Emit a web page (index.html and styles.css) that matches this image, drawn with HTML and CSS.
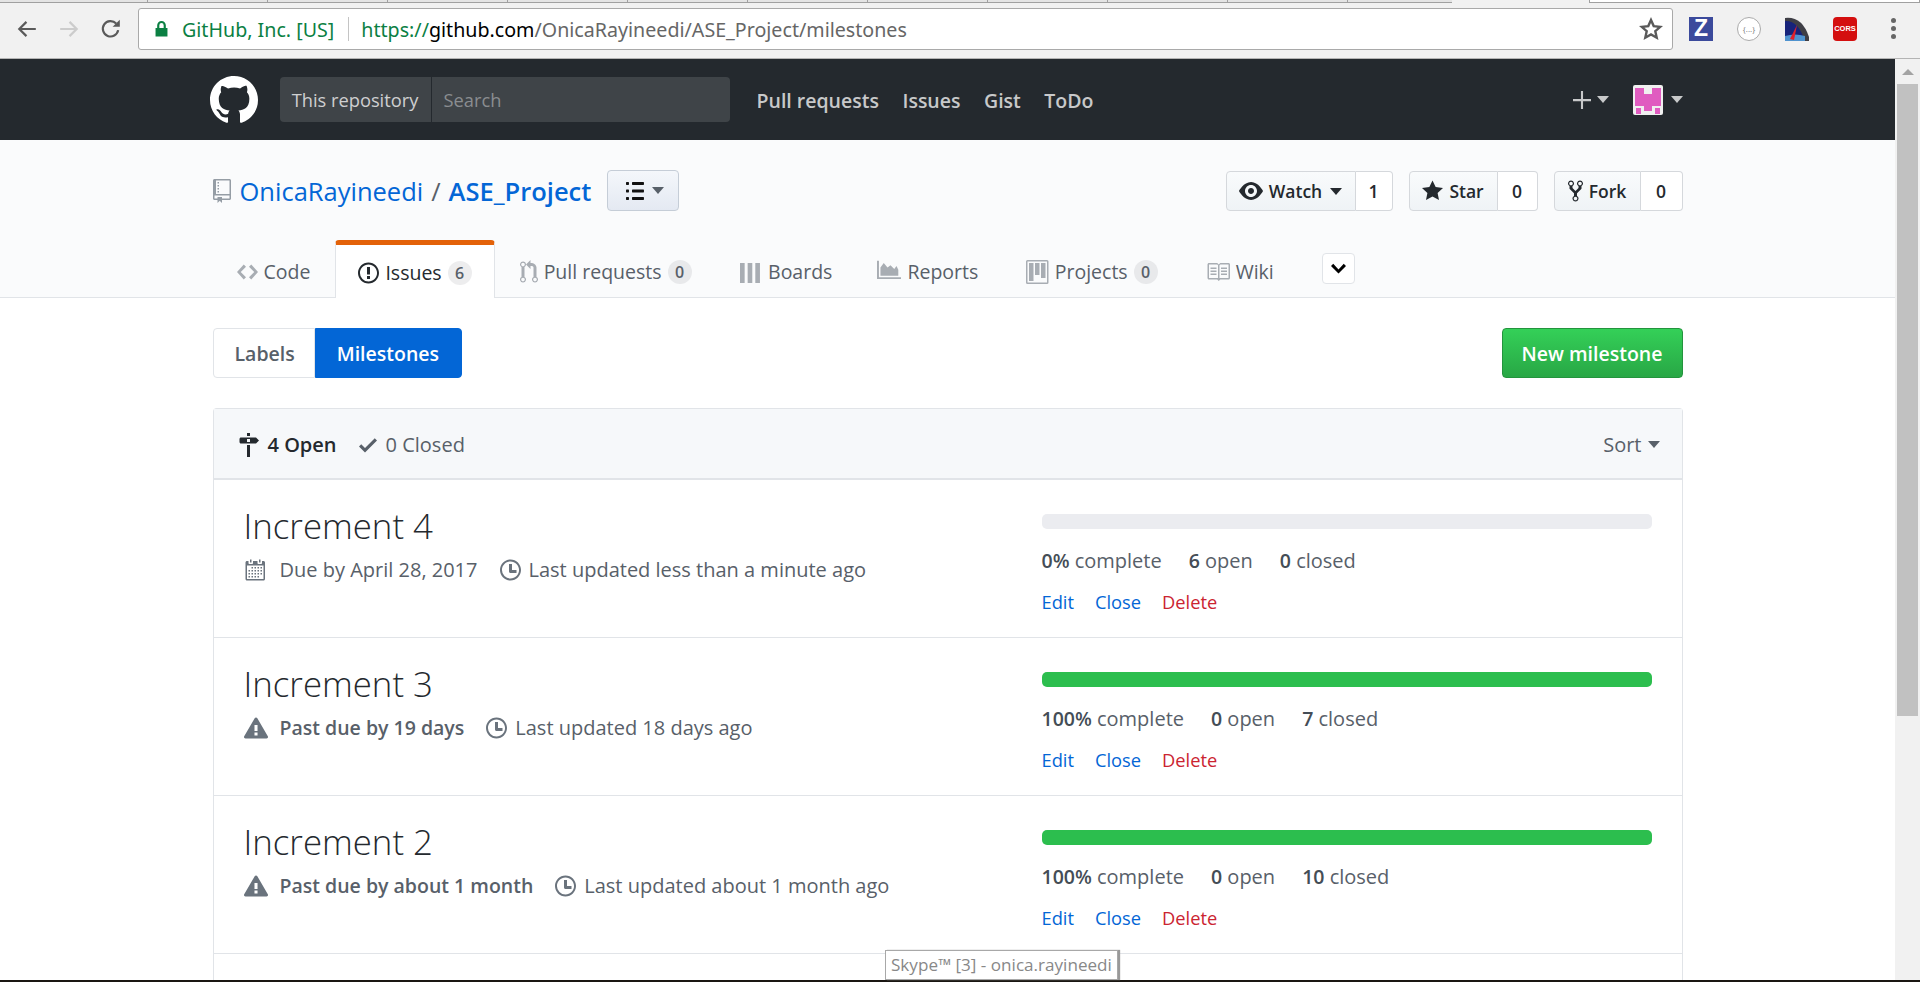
FILE: index.html
```html
<!DOCTYPE html>
<html lang="en">
<head>
    <meta charset="UTF-8" />
    <title>Milestones - OnicaRayineedi/ASE_Project</title>
    <link rel="stylesheet" href="styles.css">
</head>
<body>
    <svg class="sprite" width="0" height="0">
        <defs>
            <path id="i-mark" d="M8 0C3.58 0 0 3.58 0 8c0 3.54 2.29 6.53 5.47 7.59.4.07.55-.17.55-.38 0-.19-.01-.82-.01-1.49-2.01.37-2.53-.49-2.69-.94-.09-.23-.48-.94-.82-1.13-.28-.15-.68-.52-.01-.53.63-.01 1.08.58 1.23.82.72 1.21 1.87.87 2.33.66.07-.52.28-.87.51-1.07-1.78-.2-3.64-.89-3.64-3.95 0-.87.31-1.59.82-2.15-.08-.2-.36-1.02.08-2.12 0 0 .67-.21 2.2.82.64-.18 1.32-.27 2-.27.68 0 1.36.09 2 .27 1.53-1.04 2.2-.82 2.2-.82.44 1.1.16 1.92.08 2.12.51.56.82 1.27.82 2.15 0 3.07-1.87 3.75-3.65 3.95.29.25.54.73.54 1.48 0 1.07-.01 1.93-.01 2.2 0 .21.15.46.55.38A8.013 8.013 0 0 0 16 8c0-4.42-3.58-8-8-8z"/>
            <path id="i-repo" d="M4 9H3V8h1v1zm0-3H3v1h1V6zm0-2H3v1h1V4zm0-2H3v1h1V2zm8-1v12c0 .55-.45 1-1 1H6v2l-1.5-1.5L3 16v-2H1c-.55 0-1-.45-1-1V1c0-.55.45-1 1-1h10c.55 0 1 .45 1 1zm-1 10H1v2h2v-1h3v1h5v-2zm0-10H2v9h9V1z"/>
            <path id="i-list" d="M2 13c0 .59 0 1-.59 1H.59C0 14 0 13.59 0 13c0-.59 0-1 .59-1h.81c.59 0 .59.41.59 1H2zm2.59-9h6.81c.59 0 .59-.41.59-1 0-.59 0-1-.59-1H4.59C4 2 4 2.41 4 3c0 .59 0 1 .59 1zM1.41 7H.59C0 7 0 7.41 0 8c0 .59 0 1 .59 1h.81c.59 0 .59-.41.59-1 0-.59 0-1-.59-1h.01zm0-5H.59C0 2 0 2.41 0 3c0 .59 0 1 .59 1h.81c.59 0 .59-.41.59-1 0-.59 0-1-.59-1h.01zm10 5H4.59C4 7 4 7.41 4 8c0 .59 0 1 .59 1h6.81c.59 0 .59-.41.59-1 0-.59 0-1-.59-1h.01zm0 5H4.59C4 12 4 12.41 4 13c0 .59 0 1 .59 1h6.81c.59 0 .59-.41.59-1 0-.59 0-1-.59-1h.01z"/>
            <path id="i-code" d="M9.5 3L8 4.5 11.5 8 8 11.5 9.5 13 14 8 9.5 3zm-5 0L0 8l4.5 5L6 11.5 2.5 8 6 4.5 4.5 3z"/>
            <path id="i-issue" d="M7 2.3c3.14 0 5.7 2.56 5.7 5.7s-2.56 5.7-5.7 5.7A5.71 5.71 0 0 1 1.3 8c0-3.14 2.56-5.7 5.7-5.7zM7 1C3.14 1 0 4.14 0 8s3.14 7 7 7 7-3.14 7-7-3.14-7-7-7zm1 3H6v5h2V4zm0 6H6v2h2v-2z"/>
            <path id="i-pr" d="M11 11.28V5c-.03-.78-.34-1.47-.94-2.06C9.46 2.35 8.78 2.03 8 2H7V0L4 3l3 3V4h1c.27.02.48.11.69.31.21.2.3.42.31.69v6.28A1.993 1.993 0 0 0 10 15a1.993 1.993 0 0 0 1-3.72zm-1 2.92c-.66 0-1.2-.55-1.2-1.2 0-.65.55-1.2 1.2-1.2.65 0 1.2.55 1.2 1.2 0 .65-.55 1.2-1.2 1.2zM4 3c0-1.11-.89-2-2-2a1.993 1.993 0 0 0-1 3.72v6.56A1.993 1.993 0 0 0 2 15a1.993 1.993 0 0 0 1-3.72V4.72c.59-.34 1-.98 1-1.72zm-.8 10c0 .66-.55 1.2-1.2 1.2-.65 0-1.2-.55-1.2-1.2 0-.65.55-1.2 1.2-1.2.65 0 1.2.55 1.2 1.2zM2 4.2C1.34 4.2.8 3.65.8 3c0-.65.55-1.2 1.2-1.2.65 0 1.2.55 1.2 1.2 0 .65-.55 1.2-1.2 1.2z"/>
            <path id="i-boards" d="M0 2h3.100v13.300H0zM5.100 2h3.100v13.300H5.100zM10.200 2h3.100v13.300h-3.100z"/>
            <path id="i-reports" d="M0 .5h1.300v11H16v1.200H0zM2.300 10.500V5L4.500 2l2.500 3 2-1.500 2.500 2.500 1.500-2 1.200 2.500v4z"/>
            <path id="i-projects" d="M10 12h3V2h-3v10zm-4-2h3V2H6v8zm-4 4h3V2H2v12zm-1 1h13V1H1v14zM14 0H1a1 1 0 0 0-1 1v14a1 1 0 0 0 1 1h13a1 1 0 0 0 1-1V1a1 1 0 0 0-1-1z"/>
            <path id="i-book" d="M3 5h4v1H3V5zm0 3h4V7H3v1zm0 2h4V9H3v1zm11-5h-4v1h4V5zm0 2h-4v1h4V7zm0 2h-4v1h4V9zm2-6v9c0 .55-.45 1-1 1H9.5l-1 1-1-1H2c-.55 0-1-.45-1-1V3c0-.55.45-1 1-1h5.500l1 1 1-1H15c.55 0 1 .45 1 1zm-8 .5L7.500 3H2v9h6V3.500zm7-.5H9.500l-.5.5V12h6V3z"/>
            <path id="i-chevron" d="M5 11L0 6l1.5-1.5L5 8.25 8.5 4.5 10 6l-5 5z"/>
            <path id="i-eye" d="M8.06 2C3 2 0 8 0 8s3 6 8.06 6C13 14 16 8 16 8s-3-6-7.94-6zM8 12c-2.2 0-4-1.78-4-4 0-2.2 1.8-4 4-4 2.22 0 4 1.8 4 4 0 2.22-1.78 4-4 4zm2-4c0 1.11-.89 2-2 2-1.11 0-2-.89-2-2 0-1.11.89-2 2-2 1.11 0 2 .89 2 2z"/>
            <path id="i-star" d="M14 6l-4.9-.64L7 1 4.9 5.36 0 6l3.6 3.26L2.67 14 7 11.67 11.33 14l-.93-4.74L14 6z"/>
            <path id="i-fork" d="M8 1a1.993 1.993 0 0 0-1 3.72V6L5 8 3 6V4.72A1.993 1.993 0 0 0 2 1a1.993 1.993 0 0 0-1 3.72V6.5l3 3v1.78A1.993 1.993 0 0 0 5 15a1.993 1.993 0 0 0 1-3.72V9.5l3-3V4.72A1.993 1.993 0 0 0 8 1zM2 4.2C1.34 4.2.8 3.65.8 3c0-.65.55-1.2 1.2-1.2.65 0 1.2.55 1.2 1.2 0 .65-.55 1.2-1.2 1.2zm3 10c-.66 0-1.2-.55-1.2-1.2 0-.65.55-1.2 1.2-1.2.65 0 1.2.55 1.2 1.2 0 .65-.55 1.2-1.2 1.2zm3-10c-.66 0-1.2-.55-1.2-1.2 0-.65.55-1.2 1.2-1.2.65 0 1.2.55 1.2 1.2 0 .65-.55 1.2-1.2 1.2z"/>
            <path id="i-milestone" d="M8 2H6V0h2v2zm4 5H2c-.55 0-1-.45-1-1V4c0-.55.45-1 1-1h10l2 2-2 2zM8 4H6v2h2V4zM6 16h2V8H6v8z"/>
            <path id="i-check" d="M12 5l-8 8-4-4 1.5-1.5L4 10l6.5-6.5L12 5z"/>
            <path id="i-clock" d="M8 8h3v2H7c-.55 0-1-.45-1-1V4h2v4zM7 2.3c3.14 0 5.7 2.56 5.7 5.7s-2.56 5.7-5.7 5.7A5.71 5.71 0 0 1 1.3 8c0-3.14 2.56-5.7 5.7-5.7zM7 1C3.14 1 0 4.14 0 8s3.14 7 7 7 7-3.14 7-7-3.14-7-7-7z"/>
            <path id="i-calendar" d="M13 2h-1v1.5c0 .28-.22.5-.5.5h-2c-.28 0-.5-.22-.5-.5V2H6v1.5c0 .28-.22.5-.5.5h-2c-.28 0-.5-.22-.5-.5V2H2c-.55 0-1 .45-1 1v11c0 .55.45 1 1 1h11c.55 0 1-.45 1-1V3c0-.55-.45-1-1-1zm0 12H2V5h11v9zM5 3H4V1h1v2zm6 0h-1V1h1v2zM6 7H5V6h1v1zm2 0H7V6h1v1zm2 0H9V6h1v1zm2 0h-1V6h1v1zM4 9H3V8h1v1zm2 0H5V8h1v1zm2 0H7V8h1v1zm2 0H9V8h1v1zm2 0h-1V8h1v1zm-8 2H3v-1h1v1zm2 0H5v-1h1v1zm2 0H7v-1h1v1zm2 0H9v-1h1v1zm2 0h-1v-1h1v1zm-8 2H3v-1h1v1zm2 0H5v-1h1v1zm2 0H7v-1h1v1zm2 0H9v-1h1v1z"/>
            <path id="i-alert" d="M8.893 1.5c-.183-.31-.52-.5-.887-.5s-.703.19-.886.5L.138 13.499a.98.98 0 0 0 0 1.001c.193.31.53.501.886.501h13.964c.367 0 .704-.19.877-.5a1.03 1.03 0 0 0 .01-1.002L8.893 1.5zm.133 11.497H6.987v-2.003h2.039v2.003zm0-3.004H6.987V5.987h2.039v4.006z"/>
        </defs>
    </svg>

    <!-- browser chrome -->
    <div class="tabstrip">
        <div class="tabstrip-tabs">
            <i></i><i></i><i></i><i></i><i></i><i></i><i></i><i></i><i></i><i></i><i></i>
        </div>
        <div class="tabstrip-active"></div>
    </div>
    <div class="toolbar">
        <svg class="tool-btn" viewBox="0 0 20 20"><path d="M18 10H3M9.5 3.5 3 10l6.500 6.500" fill="none" stroke="#5a5a5a" stroke-width="2"/></svg>
        <svg class="tool-btn" viewBox="0 0 20 20"><path d="M2 10h15M10.500 3.500 17 10l-6.500 6.500" fill="none" stroke="#ccc" stroke-width="2"/></svg>
        <svg class="tool-btn" viewBox="0 0 20 20"><path d="M16.500 11a7 7 0 1 1-1.800-6" fill="none" stroke="#5a5a5a" stroke-width="2"/><path d="M18 1.500V8h-6.500z" fill="#5a5a5a"/></svg>
        <div class="omnibox">
            <svg class="lock" viewBox="0 0 12 16"><path d="M2 7V4.500a4 4 0 0 1 8 0V7h1.500v8H.5V7zm2 0h4V4.500a2 2 0 0 0-4 0z" fill="#0b8043"/></svg>
            <span class="secure">GitHub, Inc. [US]</span>
            <span class="omni-sep"></span>
            <span class="url"><span class="secure">https://</span><span class="url-host">github.com</span>/OnicaRayineedi/ASE_Project/milestones</span>
            <svg class="bookmark" viewBox="0 0 24 24"><path d="m12 3 2.700 6.100 6.600.7-5 4.400 1.400 6.500-5.700-3.300-5.700 3.300 1.400-6.500-5-4.400 6.600-.7z" fill="none" stroke="#5a5a5a" stroke-width="2.400"/></svg>
        </div>
        <div class="extensions">
            <span class="ext ext-z">Z</span>
            <span class="ext ext-json">{...}</span>
            <svg class="ext" viewBox="0 0 24 24"><path d="M0 1Q17-1 24 20v4H0z" fill="#3f3f46"/><path d="M0 4Q13 3 20 24H0z" fill="#17237a"/><path d="M0 19q10-3 20 0v5H0z" fill="#4f93cf"/><path d="M5 22 12 8l-3 15z" fill="#e0202a"/></svg>
            <span class="ext ext-cors">CORS</span>
        </div>
        <div class="chrome-menu"><i></i><i></i><i></i></div>
    </div>

    <div class="viewport">
        <div class="page">
            <header class="site-head">
                <div class="container site-head-inner">
                    <svg class="site-logo" viewBox="0 0 16 16"><use href="#i-mark"/></svg>
                    <div class="site-search">
                        <span class="scope">This repository</span>
                        <span class="search-hint">Search</span>
                    </div>
                    <nav class="site-nav">
                        <a>Pull requests</a>
                        <a>Issues</a>
                        <a>Gist</a>
                        <a>ToDo</a>
                    </nav>
                    <div class="site-user">
                        <svg class="plus" viewBox="0 0 12 16"><path d="M12 8.750H6.700V14H5.300V8.750H0v-1.500h5.300V2h1.400v5.250H12z"/></svg>
                        <span class="caret caret-light"></span>
                        <svg class="avatar" viewBox="0 0 30 30"><rect width="30" height="30" rx="2" fill="#f0f0f0"/><path d="M2 3h9v6h8V3h9v18H19v5h-8v-5H2z" fill="#e05cc0"/><path d="M3 23h5v6H3zM22 23h5v6h-5z" fill="#e05cc0"/></svg>
                        <span class="caret caret-light"></span>
                    </div>
                </div>
            </header>

            <section class="repohead">
                <div class="container">
                    <div class="repo-title-row">
                        <div class="repo-title">
                            <svg class="icon repo-icon" viewBox="0 0 12 16"><use href="#i-repo"/></svg>
                            <a class="link">OnicaRayineedi</a>
                            <span class="slash">/</span>
                            <a class="link repo-name">ASE_Project</a>
                            <button class="list-btn">
                                <svg class="icon" viewBox="0 0 12 16"><use href="#i-list"/></svg>
                                <span class="caret caret-dim"></span>
                            </button>
                        </div>
                        <div class="repo-actions">
                            <div class="social">
                                <span class="social-btn social-watch"><svg class="icon" viewBox="0 0 16 16"><use href="#i-eye"/></svg>Watch<span class="caret"></span></span>
                                <span class="social-count count-watch">1</span>
                            </div>
                            <div class="social">
                                <span class="social-btn social-star"><svg class="icon" viewBox="0 0 14 16"><use href="#i-star"/></svg>Star</span>
                                <span class="social-count count-star">0</span>
                            </div>
                            <div class="social">
                                <span class="social-btn social-fork"><svg class="icon" viewBox="0 0 10 16"><use href="#i-fork"/></svg>Fork</span>
                                <span class="social-count count-fork">0</span>
                            </div>
                        </div>
                    </div>
                    <nav class="repo-tabs">
                        <a class="tab"><svg class="icon" viewBox="0 0 14 16"><use href="#i-code"/></svg>Code</a>
                        <a class="tab tab-selected"><svg class="icon" viewBox="0 0 14 16"><use href="#i-issue"/></svg>Issues<span class="counter">6</span></a>
                        <a class="tab"><svg class="icon" viewBox="0 0 12 16"><use href="#i-pr"/></svg>Pull requests<span class="counter">0</span></a>
                        <a class="tab tab-boards"><svg class="icon" viewBox="0 0 15 16"><use href="#i-boards"/></svg>Boards</a>
                        <a class="tab"><svg class="icon" viewBox="0 0 16 16"><use href="#i-reports"/></svg>Reports</a>
                        <a class="tab"><svg class="icon" viewBox="0 0 15 16"><use href="#i-projects"/></svg>Projects<span class="counter">0</span></a>
                        <a class="tab"><svg class="icon" viewBox="0 0 16 16"><use href="#i-book"/></svg>Wiki</a>
                        <button class="tabs-more"><svg viewBox="0 0 10 16"><use href="#i-chevron"/></svg></button>
                    </nav>
                </div>
            </section>

            <main class="container">
                <div class="subnav-row">
                    <div class="subnav">
                        <a class="subnav-item">Labels</a>
                        <a class="subnav-item subnav-selected">Milestones</a>
                    </div>
                    <button class="btn-primary">New milestone</button>
                </div>

                <div class="milestones">
                    <div class="milestones-head">
                        <a class="state state-open"><svg class="icon" viewBox="0 0 14 16"><use href="#i-milestone"/></svg>4 Open</a>
                        <a class="state"><svg class="icon" viewBox="0 0 12 16"><use href="#i-check"/></svg>0 Closed</a>
                        <a class="sort">Sort<span class="caret caret-dim"></span></a>
                    </div>

                    <div class="milestone">
                        <div class="milestone-info">
                            <h2>Increment 4</h2>
                            <div class="meta">
                                <span class="meta-due"><svg class="icon" viewBox="0 0 14 16"><use href="#i-calendar"/></svg>Due by April 28, 2017</span>
                                <span><svg class="icon" viewBox="0 0 14 16"><use href="#i-clock"/></svg>Last updated less than a minute ago</span>
                            </div>
                        </div>
                        <div class="milestone-side">
                            <div class="progress"></div>
                            <div class="stats"><span><b>0%</b> complete</span><span><b>6</b> open</span><span><b>0</b> closed</span></div>
                            <div class="actions"><a>Edit</a><a>Close</a><a class="danger">Delete</a></div>
                        </div>
                    </div>

                    <div class="milestone">
                        <div class="milestone-info">
                            <h2>Increment 3</h2>
                            <div class="meta">
                                <span><svg class="icon" viewBox="0 0 16 16"><use href="#i-alert"/></svg><b>Past due by 19 days</b></span>
                                <span><svg class="icon" viewBox="0 0 14 16"><use href="#i-clock"/></svg>Last updated 18 days ago</span>
                            </div>
                        </div>
                        <div class="milestone-side">
                            <div class="progress"><div class="progress-bar" style="width:100%"></div></div>
                            <div class="stats"><span><b>100%</b> complete</span><span><b>0</b> open</span><span><b>7</b> closed</span></div>
                            <div class="actions"><a>Edit</a><a>Close</a><a class="danger">Delete</a></div>
                        </div>
                    </div>

                    <div class="milestone">
                        <div class="milestone-info">
                            <h2>Increment 2</h2>
                            <div class="meta">
                                <span><svg class="icon" viewBox="0 0 16 16"><use href="#i-alert"/></svg><b>Past due by about 1 month</b></span>
                                <span><svg class="icon" viewBox="0 0 14 16"><use href="#i-clock"/></svg>Last updated about 1 month ago</span>
                            </div>
                        </div>
                        <div class="milestone-side">
                            <div class="progress"><div class="progress-bar" style="width:100%"></div></div>
                            <div class="stats"><span><b>100%</b> complete</span><span><b>0</b> open</span><span><b>10</b> closed</span></div>
                            <div class="actions"><a>Edit</a><a>Close</a><a class="danger">Delete</a></div>
                        </div>
                    </div>

                    <div class="milestones-rest"></div>
                </div>
            </main>
        </div>

        <div class="scrollbar">
            <span class="scroll-up"></span>
            <div class="scroll-thumb"></div>
        </div>
    </div>
    <div class="taskbar"></div>

    <div class="os-tooltip">Skype™ [3] - onica.rayineedi</div>
</body>
</html>
```

FILE: styles.css
```css
* {
    box-sizing: border-box;
}

html, body {
    margin: 0;
    height: 982px;
    overflow: hidden;
}

body {
    display: flex;
    flex-direction: column;
    position: relative;
    font-family: 'Open Sans', 'Noto Sans', sans-serif;
    font-size: 20px;
    color: #24292e;
    background: #fff;
}

.sprite {
    position: absolute;
}

a {
    text-decoration: none;
}

button {
    font: inherit;
    color: inherit;
    cursor: pointer;
}

.container {
    width: 1470px;
    margin: 0 auto;
}

.icon {
    height: 24px;
    width: auto;
    fill: currentColor;
    fill-rule: evenodd;
    flex: none;
}

.caret {
    display: inline-block;
    width: 0;
    height: 0;
    border: 6px solid transparent;
    border-top: 7px solid currentColor;
    border-bottom: 0;
}

.caret-light {
    color: rgba(255, 255, 255, 0.75);
}

.caret-dim {
    color: #586069;
}

/* browser chrome */
.tabstrip {
    display: flex;
    height: 3px;
    flex: none;
    background: #f1f1f1;
}

.tabstrip-tabs {
    display: flex;
    width: 1452px;
    padding-left: 28px;
    border-bottom: 1px solid #a0a0a0;
    background: #e4e4e4;
}

.tabstrip-tabs i {
    width: 120px;
    border-right: 1px solid #a0a0a0;
}

.tabstrip-active {
    width: 331px;
    margin-left: 137px;
    background: #fff;
    border: 1px solid #a0a0a0;
    border-top: 0;
}

.toolbar {
    display: flex;
    align-items: center;
    height: 56px;
    flex: none;
    padding: 0 0 4px 16px;
    background: #f1f1f1;
    border-bottom: 1px solid #b4b4b4;
}

.tool-btn {
    width: 22px;
    height: 22px;
    margin-right: 20px;
}

.omnibox {
    display: flex;
    align-items: center;
    width: 1535px;
    height: 42px;
    margin-left: -4px;
    padding: 1px 9px 0 16px;
    background: #fff;
    border: 1px solid #a9a9a9;
    border-radius: 3px;
    font-family: 'Noto Sans', sans-serif;
    font-size: 19.650px;
    color: #666;
}

.lock {
    width: 13px;
    height: 18px;
    margin-right: 14px;
}

.secure {
    color: #0b8043;
}

.omni-sep {
    width: 1px;
    height: 24px;
    margin: 0 12px 0 14px;
    background: #c4c4c4;
}

.url-host {
    color: #000;
}

.bookmark {
    width: 24px;
    height: 24px;
    margin-left: auto;
}

.extensions {
    display: flex;
    gap: 24px;
    margin-left: 16px;
}

.ext {
    display: flex;
    align-items: center;
    justify-content: center;
    width: 24px;
    height: 24px;
    color: #fff;
}

.ext-z {
    background: #3b4a9c;
    font-family: 'Liberation Sans', sans-serif;
    font-size: 23px;
    font-weight: bold;
}

.ext-json {
    border: 1px solid #aaa;
    border-radius: 50%;
    background: #fff;
    color: #777;
    font-size: 8px;
}

.ext-cors {
    background: #d40f0f;
    border-radius: 4px;
    font-family: 'Liberation Sans', sans-serif;
    font-size: 7.500px;
    font-weight: bold;
}

.chrome-menu {
    display: flex;
    flex-direction: column;
    gap: 3px;
    margin-left: 34px;
}

.chrome-menu i {
    width: 5px;
    height: 5px;
    border-radius: 50%;
    background: #666;
}

.viewport {
    display: flex;
    flex: 1;
    min-height: 0;
}

.page {
    flex: 1;
    min-width: 0;
    overflow: hidden;
}

.scrollbar {
    width: 25px;
    padding: 10px 2px 0;
    background: #f1f1f1;
}

.scroll-up {
    display: block;
    width: 0;
    height: 0;
    margin: 0 auto 9px;
    border: 6px solid transparent;
    border-bottom: 6px solid #a3a3a3;
    border-top: 0;
}

.scroll-thumb {
    height: 632px;
    background: #c1c1c1;
}

.taskbar {
    height: 2px;
    flex: none;
    background: #1a1612;
}

.os-tooltip {
    position: absolute;
    left: 885px;
    top: 950px;
    width: 233px;
    height: 30px;
    line-height: 27px;
    padding-left: 5px;
    background: #fff;
    border: 1px solid #a8a8a8;
    box-shadow: 2px 0 1px #999;
    color: #888;
    font-size: 17.100px;
    white-space: nowrap;
}

/* site header */
.site-head {
    height: 81px;
    background: #24292e;
}

.site-head-inner {
    display: flex;
    align-items: center;
    height: 100%;
}

.site-logo {
    width: 48px;
    height: 48px;
    margin-left: -3px;
    fill: #fff;
}

.site-search {
    display: flex;
    align-items: center;
    width: 450px;
    height: 45px;
    margin-left: 22px;
    background: #3f4448;
    border-radius: 4px;
    color: rgba(255, 255, 255, 0.75);
    font-size: 18.300px;
}

.scope {
    width: 152px;
    line-height: 45px;
    text-align: center;
    border-right: 1px solid #24292e;
    white-space: nowrap;
}

.search-hint {
    padding-left: 12px;
    color: #8a8d90;
}

.site-nav {
    display: flex;
    gap: 23.500px;
    margin-left: 27px;
    padding-top: 2px;
    font-size: 19.500px;
    font-weight: 600;
    color: rgba(255, 255, 255, 0.75);
}

.site-user {
    display: flex;
    align-items: center;
    margin-left: auto;
    color: rgba(255, 255, 255, 0.75);
}

.plus {
    width: 18px;
    height: 24px;
    margin-right: 6px;
    fill: currentColor;
}

.avatar {
    width: 30px;
    height: 30px;
    margin: 0 8px 0 24px;
}

/* repo head */
.repohead {
    height: 158px;
    padding-top: 31px;
    background: #fafbfc;
    border-bottom: 1px solid #e1e4e8;
}

.repo-title-row {
    display: flex;
    justify-content: space-between;
    height: 40px;
}

.repo-title {
    display: flex;
    align-items: center;
    padding-bottom: 1px;
    font-size: 25.500px;
    color: #586069;
}

.repo-icon {
    color: #959da5;
    margin-right: 9px;
}

.link {
    color: #0366d6;
}

.slash {
    margin: 0 8px;
}

.repo-name {
    font-weight: 600;
}

.list-btn {
    display: flex;
    align-items: center;
    gap: 8px;
    width: 72px;
    height: 41px;
    margin-left: 16px;
    padding: 0 0 0 18px;
    background: linear-gradient(#f4f7fb, #e4e9f2);
    border: 1px solid #c5cdd7;
    border-radius: 4px;
    color: #111;
}

.repo-actions {
    display: flex;
    gap: 16px;
}

.social {
    display: flex;
    height: 40px;
    font-size: 17.500px;
    font-weight: 600;
}

.social-btn {
    display: flex;
    align-items: center;
    justify-content: center;
    gap: 6px;
    background: linear-gradient(#f9fbfc, #eff3f6);
    border: 1px solid #d5d8dc;
    border-radius: 4px 0 0 4px;
}

.social-btn .caret {
    margin-left: 2px;
}

.social-watch {
    width: 130px;
}

.social-star {
    width: 89px;
}

.social-fork {
    width: 87px;
}

.social-count {
    display: flex;
    align-items: center;
    justify-content: center;
    background: #fff;
    border: 1px solid #d5d8dc;
    border-left: 0;
    border-radius: 0 4px 4px 0;
}

.count-watch {
    width: 37px;
}

.count-star {
    width: 40px;
}

.count-fork {
    width: 42px;
}

.repo-tabs {
    display: flex;
    align-items: flex-start;
    height: 58px;
    margin-top: 29px;
    font-size: 19.500px;
}

.tab {
    display: flex;
    align-items: center;
    gap: 6px;
    height: 58px;
    padding: 5px 24px 0;
    color: #586069;
    white-space: nowrap;
}

.tab .icon {
    color: #a8adb3;
}

.tab-boards {
    padding-right: 21px;
}

.tab-selected {
    margin: 0 1px;
    padding: 2px 22px 0;
    background: #fff;
    color: #24292e;
    border: 1px solid #e1e4e8;
    border-top: 5px solid #e36209;
    border-bottom: 0;
    border-radius: 4px 4px 0 0;
    position: relative;
    z-index: 1;
}

.tab-selected .icon {
    color: #24292e;
}

.counter {
    min-width: 24px;
    padding: 0 7px;
    background: rgba(27, 31, 35, 0.08);
    border-radius: 24px;
    color: #586069;
    font-size: 16px;
    font-weight: 600;
    line-height: 24px;
    text-align: center;
}

.tabs-more {
    display: flex;
    align-items: center;
    justify-content: center;
    width: 33px;
    height: 31px;
    margin: 13px 0 0 24px;
    padding: 0;
    background: #fff;
    border: 1px solid #e1e4e8;
    border-radius: 4px;
}

.tabs-more svg {
    width: 15px;
    height: 24px;
}

/* milestones */
.subnav-row {
    display: flex;
    justify-content: space-between;
    padding-top: 30px;
}

.subnav {
    display: flex;
    height: 50px;
    font-size: 19.500px;
    font-weight: 600;
}

.subnav-item {
    display: flex;
    align-items: center;
    padding: 0 19px 0 21px;
    color: #586069;
    border: 1px solid #e1e4e8;
    border-radius: 4px 0 0 4px;
}

.subnav-selected {
    padding: 0 22px 0 21px;
    background: #0366d6;
    border-color: #0366d6;
    border-radius: 0 4px 4px 0;
    color: #fff;
}

.btn-primary {
    width: 181px;
    height: 50px;
    padding: 0;
    background: linear-gradient(#34d058, #28a745);
    border: 1px solid #23943d;
    border-radius: 4px;
    color: #fff;
    font-size: 19.500px;
    font-weight: 600;
}

.milestones {
    margin-top: 30px;
    border: 1px solid #e1e4e8;
    border-bottom: 0;
    border-radius: 4px 4px 0 0;
}

.milestones-head {
    display: flex;
    align-items: center;
    gap: 22px;
    height: 71px;
    padding: 2px 22px 0 24px;
    background: #f6f8fa;
    border-bottom: 2px solid #e1e4e8;
    color: #586069;
}

.state {
    display: flex;
    align-items: center;
    gap: 9px;
}

.state-open {
    color: #24292e;
    font-weight: 600;
}

.sort {
    display: flex;
    align-items: center;
    gap: 6px;
    margin-left: auto;
}

.milestone {
    display: flex;
    height: 158px;
    padding: 0 30px 0 30px;
    border-bottom: 1px solid #e1e4e8;
}

.milestones-rest {
    height: 60px;
}

.milestone-info {
    flex: 1;
    padding-top: 22px;
}

.milestone-info h2 {
    margin: 0;
    font-size: 34.800px;
    font-weight: 300;
    line-height: 48px;
    color: #24292e;
}

.meta {
    display: flex;
    gap: 22px;
    margin-top: 7px;
    color: #586069;
    line-height: 26px;
}

.meta span {
    display: flex;
    align-items: center;
    gap: 8px;
}

.meta .meta-due {
    gap: 15px;
}

.meta .icon {
    color: #6a737d;
}

.meta b {
    font-size: 19.500px;
    font-weight: 600;
    margin-left: 4px;
}

.milestone-side {
    width: 610px;
    padding-top: 34px;
}

.progress {
    height: 15px;
    background: #ebecf0;
    border-radius: 5px;
    overflow: hidden;
}

.progress-bar {
    height: 100%;
    background: #2cbe4e;
}

.stats {
    display: flex;
    gap: 27px;
    margin-top: 19px;
    line-height: 26px;
    color: #586069;
}

.stats b {
    font-size: 19.500px;
    font-weight: 600;
    color: #444d56;
}

.actions {
    display: flex;
    gap: 21px;
    margin-top: 15px;
    line-height: 26px;
    font-size: 18.300px;
    color: #0366d6;
}

.danger {
    color: #cb2431;
}
```
